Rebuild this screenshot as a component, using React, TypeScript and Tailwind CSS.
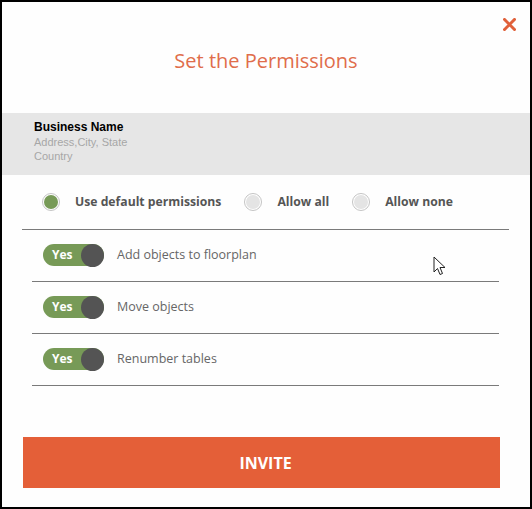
const perms = ['Add objects to floorplan', 'Move objects', 'Renumber tables']

const radios = [
  { label: 'Use default permissions', checked: true, gap: 'mr-[23px]' },
  { label: 'Allow all', checked: false, gap: 'mr-[23px]' },
  { label: 'Allow none', checked: false, gap: '' },
]

function Radio({ checked }: { checked: boolean }) {
  return (
    <span className="flex h-[18px] w-[18px] items-center justify-center rounded-full border border-[#c4c4c4] bg-white">
      <span className={`h-[14px] w-[14px] rounded-full ${checked ? 'bg-[#779a57]' : 'bg-[#e4e4e4]'}`} />
    </span>
  )
}

function Toggle() {
  return (
    <div className="flex h-[22px] w-[61px] items-center rounded-full bg-[#779a57]">
      <span className="ml-[9px] text-[12px] font-bold leading-none text-white">Yes</span>
      <span className="ml-auto h-[23px] w-[23px] rounded-full bg-[#545454]" />
    </div>
  )
}

export default function App() {
  return (
    <div
      className="relative flex h-[509px] w-[532px] flex-col border-2 border-black bg-[#fefefe]"
      style={{ fontFamily: '"Open Sans", sans-serif' }}
    >
      {/* Header */}
      <div className="relative h-[111px] shrink-0">
        <button className="absolute right-[14px] top-[16px] p-0">
          <svg width="13" height="13" viewBox="0 0 13 13">
            <path d="M1.5 1.5 L11.5 11.5 M11.5 1.5 L1.5 11.5" stroke="#e0603a" strokeWidth="3" strokeLinecap="square" />
          </svg>
        </button>
        <h1 className="pt-[46px] text-center text-[20px] font-normal leading-[26px] text-[#e06d4b]">
          Set the Permissions
        </h1>
      </div>

      {/* Business */}
      <div
        className="h-[62px] shrink-0 bg-[#e6e6e6] pl-[32px] pt-[7px]"
        style={{ fontFamily: '"Liberation Sans", Arial, sans-serif' }}
      >
        <div className="text-[12px] font-bold leading-[15px] text-black">Business Name</div>
        <div className="text-[11px] leading-[14px] text-[#a6a6a6]">Address,City, State</div>
        <div className="text-[11px] leading-[14px] text-[#a6a6a6]">Country</div>
      </div>

      {/* Radios */}
      <div className="flex h-[54px] shrink-0 items-center pl-[40px]">
        {radios.map((r) => (
          <label key={r.label} className={`flex items-center ${r.gap}`}>
            <Radio checked={r.checked} />
            <span className="ml-[15px] text-[12.2px] font-bold text-[#555555]">{r.label}</span>
          </label>
        ))}
      </div>
      <div className="ml-[20px] h-px w-[487px] shrink-0 bg-[#7a7a7a]" />

      {/* Permission rows */}
      <div className="ml-[30px] w-[467px]">
        {perms.map((p) => (
          <div key={p} className="flex h-[52px] items-center border-b border-[#7a7a7a] pl-[11px] pb-[1px]">
            <Toggle />
            <span className="ml-[13px] text-[12.5px] text-[#666666]">{p}</span>
          </div>
        ))}
      </div>

      {/* Invite */}
      <button className="ml-[21px] mt-[51px] h-[51px] w-[477px] shrink-0 bg-[#e45f38] pl-[8px] text-[16px] font-bold text-white">
        INVITE
      </button>

      {/* mouse cursor */}
      <svg className="absolute left-[431px] top-[254px]" width="14" height="21" viewBox="0 0 14 21">
        <path
          d="M1 1 L1 16 L4.5 12.5 L7 18.5 L9.5 17.5 L7 11.5 L12 11.5 Z"
          fill="#ffffff"
          stroke="#222222"
          strokeWidth="1"
          strokeLinejoin="round"
        />
      </svg>
    </div>
  )
}
